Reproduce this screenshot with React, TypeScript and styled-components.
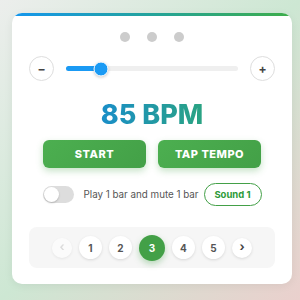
import React, { useState } from 'react';
import styled, { createGlobalStyle } from 'styled-components';

const GlobalStyle = createGlobalStyle`
  html, body {
    margin: 0;
    padding: 0;
    height: 100%;
  }
  body {
    font-family: Inter, 'Noto Sans', sans-serif;
    background: linear-gradient(135deg, #eceeec 0%, #cde7d3 50%, #ead0cd 100%);
  }
`;

export default function App() {
  const [bpm] = useState(85);
  const [page] = useState(3);
  const progress = ((bpm - 30) / (300 - 30)) * 100;

  return (
    <>
      <GlobalStyle />
      <Page>
        <Card>
          <Stripe />
          <Dots>
            <Dot />
            <Dot />
            <Dot />
          </Dots>

          <SliderRow>
            <RoundButton>−</RoundButton>
            <Track>
              <Fill style={{ width: `${progress}%` }} />
              <Thumb style={{ left: `${progress}%` }} />
            </Track>
            <RoundButton>+</RoundButton>
          </SliderRow>

          <Bpm>{bpm} BPM</Bpm>

          <Actions>
            <ActionButton>START</ActionButton>
            <ActionButton>TAP TEMPO</ActionButton>
          </Actions>

          <OptionRow>
            <Toggle>
              <Knob />
            </Toggle>
            <OptionLabel>Play 1 bar and mute 1 bar</OptionLabel>
            <SoundButton>Sound 1</SoundButton>
          </OptionRow>

          <Pagination>
            <PageArrow $disabled>‹</PageArrow>
            {[1, 2, 3, 4, 5].map((n) => (
              <PageDot key={n} $active={n === page}>
                {n}
              </PageDot>
            ))}
            <PageArrow>›</PageArrow>
          </Pagination>
        </Card>
      </Page>
    </>
  );
}

const Page = styled.div`
  min-height: 100vh;
  box-sizing: border-box;
  padding: 13px 8px 0 12px;
`;

const Card = styled.div`
  width: 280px;
  height: 271px;
  box-sizing: border-box;
  background: #fff;
  border-radius: 10px;
  overflow: hidden;
  box-shadow: 0 2px 10px rgba(0, 0, 0, 0.06);
  display: flex;
  flex-direction: column;
  align-items: center;
`;

const Stripe = styled.div`
  align-self: stretch;
  height: 3px;
  background: linear-gradient(90deg, #1496ee 0%, #23a39a 50%, #3ead4a 100%);
`;

const Dots = styled.div`
  display: flex;
  gap: 17px;
  margin-top: 16px;
`;

const Dot = styled.span`
  width: 10px;
  height: 10px;
  border-radius: 50%;
  background: #cccccc;
`;

const SliderRow = styled.div`
  align-self: stretch;
  display: flex;
  align-items: center;
  gap: 12px;
  padding: 0 17px;
  margin-top: 14px;
`;

const RoundButton = styled.button`
  width: 25px;
  height: 25px;
  flex: none;
  border-radius: 50%;
  border: 1px solid #dedede;
  background: #fff;
  color: #444;
  font-family: Inter, sans-serif;
  font-weight: 700;
  font-size: 12px;
  line-height: 1;
  padding: 0;
  display: flex;
  align-items: center;
  justify-content: center;
`;

const Track = styled.div`
  position: relative;
  flex: 1;
  height: 5px;
  border-radius: 3px;
  background: #efefef;
`;

const Fill = styled.div`
  height: 100%;
  border-radius: 3px;
  background: #1a9af4;
`;

const Thumb = styled.span`
  position: absolute;
  top: 50%;
  width: 13px;
  height: 13px;
  border-radius: 50%;
  background: #1a9af4;
  border: 1px solid #fff;
  box-shadow: 0 1px 3px rgba(0, 0, 0, 0.2);
  transform: translate(-50%, -50%);
`;

const Bpm = styled.div`
  margin-top: 20px;
  font-family: Inter, sans-serif;
  font-weight: 800;
  font-size: 27px;
  line-height: 28px;
  background: linear-gradient(90deg, #1a8ec8 0%, #2aa382 100%);
  -webkit-background-clip: text;
  background-clip: text;
  color: transparent;
`;

const Actions = styled.div`
  display: grid;
  grid-template-columns: 103px 103px;
  gap: 12px;
  margin-top: 11px;
`;

const ActionButton = styled.button`
  height: 28px;
  border: 0;
  border-radius: 6px;
  background: linear-gradient(135deg, #4caf50 0%, #43a047 100%);
  color: #fff;
  font-family: Inter, sans-serif;
  font-weight: 800;
  font-size: 11px;
  letter-spacing: 0.5px;
  box-shadow: 0 3px 7px rgba(67, 160, 71, 0.3);
`;

const OptionRow = styled.div`
  display: flex;
  align-items: center;
  width: 219px;
  margin-top: 15px;
`;

const Toggle = styled.div`
  width: 31px;
  height: 17px;
  flex: none;
  box-sizing: border-box;
  border-radius: 9px;
  background: #dddddd;
  padding: 1px;
  display: flex;
`;

const Knob = styled.span`
  width: 15px;
  height: 15px;
  border-radius: 50%;
  background: #fff;
  box-shadow: 0 1px 2px rgba(0, 0, 0, 0.2);
`;

const OptionLabel = styled.span`
  margin-left: 10px;
  font-family: Inter, sans-serif;
  font-size: 9.8px;
  color: #555;
  white-space: nowrap;
`;

const SoundButton = styled.button`
  margin-left: auto;
  width: 58px;
  height: 23px;
  flex: none;
  border: 1px solid #43a047;
  border-radius: 12px;
  background: #fff;
  color: #2e9b3a;
  font-family: Inter, sans-serif;
  font-weight: 700;
  font-size: 9.5px;
  padding: 0;
`;

const Pagination = styled.div`
  align-self: stretch;
  margin: 21px 17px 0;
  height: 41px;
  border-radius: 8px;
  background: #f6f6f6;
  display: flex;
  align-items: center;
  justify-content: center;
  gap: 7px;
`;

const PageDot = styled.span<{ $active?: boolean }>`
  width: ${(p) => (p.$active ? 26 : 23)}px;
  height: ${(p) => (p.$active ? 26 : 23)}px;
  border-radius: 50%;
  display: flex;
  align-items: center;
  justify-content: center;
  font-family: Inter, sans-serif;
  font-weight: 700;
  font-size: 10px;
  color: ${(p) => (p.$active ? '#fff' : '#555')};
  background: ${(p) => (p.$active ? '#43a047' : '#fff')};
  box-shadow: ${(p) =>
    p.$active ? '0 3px 6px rgba(67, 160, 71, 0.35)' : '0 1px 3px rgba(0, 0, 0, 0.12)'};
`;

const PageArrow = styled.span<{ $disabled?: boolean }>`
  width: 20px;
  height: 20px;
  border-radius: 50%;
  display: flex;
  align-items: center;
  justify-content: center;
  font-family: Inter, sans-serif;
  font-weight: 700;
  font-size: 12px;
  line-height: 1;
  padding-bottom: 2px;
  box-sizing: border-box;
  color: ${(p) => (p.$disabled ? '#ccc' : '#444')};
  background: #fff;
  opacity: ${(p) => (p.$disabled ? 0.6 : 1)};
  box-shadow: 0 1px 3px rgba(0, 0, 0, 0.12);
`;
